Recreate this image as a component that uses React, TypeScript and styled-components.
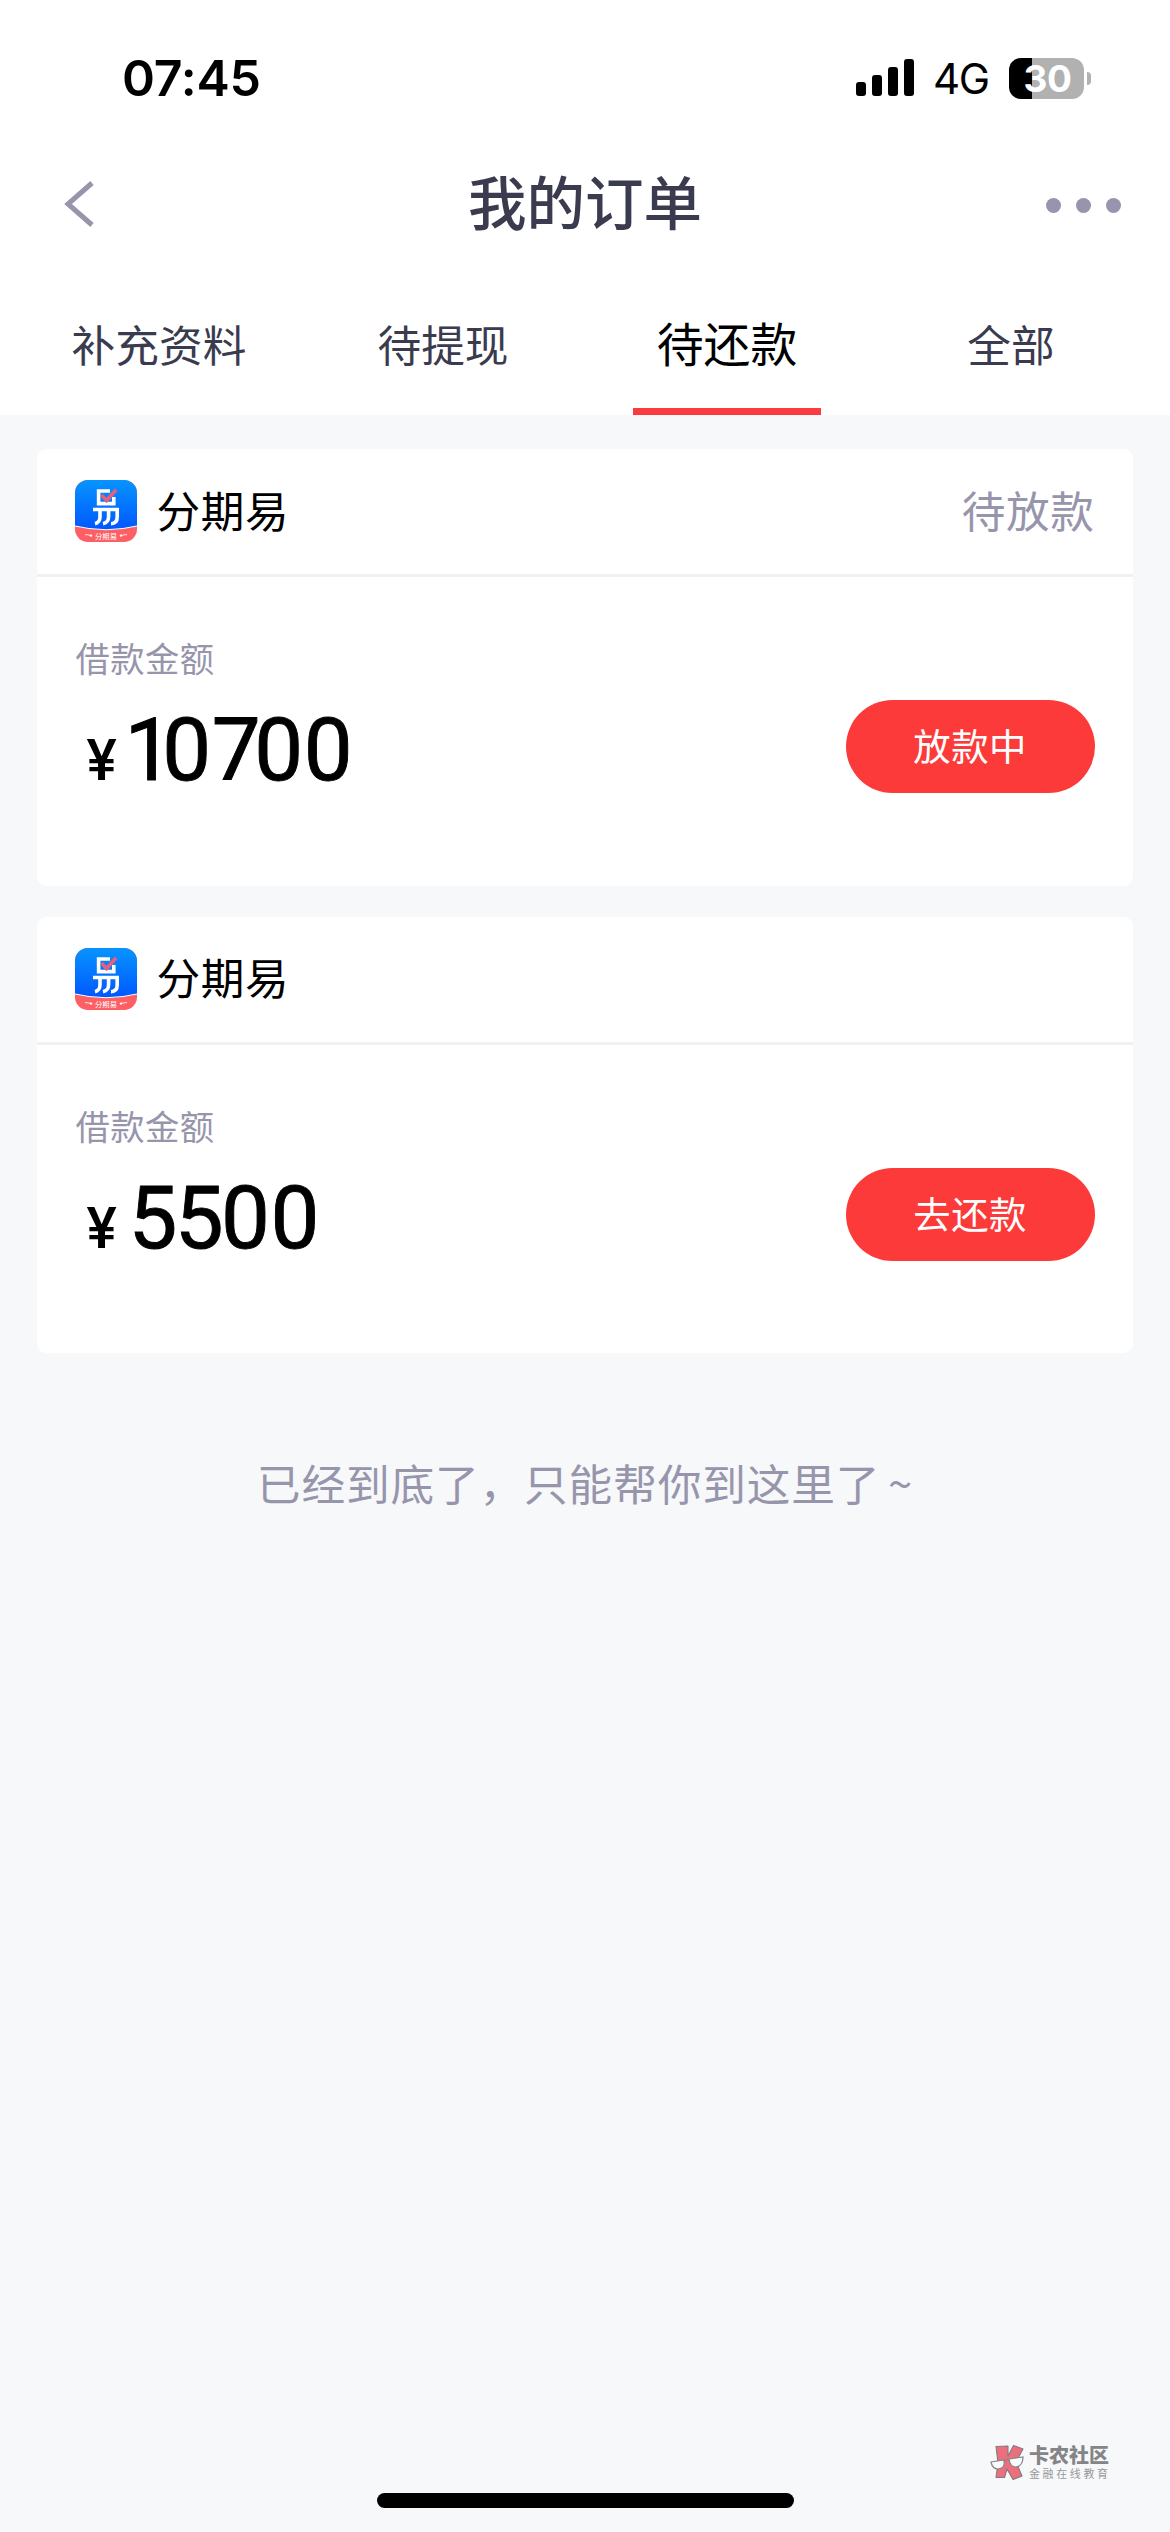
import React from "react";
import styled, { createGlobalStyle } from "styled-components";

const GlobalStyle = createGlobalStyle`
  * { box-sizing: border-box; }
  body { margin: 0; background: #f7f8fa; }
`;

const cjk = `"Noto Sans CJK SC", sans-serif`;

const Screen = styled.div`
  position: relative;
  display: flex;
  flex-direction: column;
  width: 1170px;
  height: 2532px;
  overflow: hidden;
  background: #f7f8fa;
  font-family: ${cjk};
  color: #000;
`;

const Header = styled.header`
  display: flex;
  flex-direction: column;
  height: 415px;
  background: #fff;
`;

const StatusBar = styled.div`
  display: flex;
  justify-content: space-between;
  align-items: center;
  height: 156px;
  padding: 0 79px 0 122px;
  font-family: Inter, "Liberation Sans", sans-serif;
`;

const Clock = styled.span`
  font-size: 50px;
  font-weight: 600;
  line-height: 60px;
  letter-spacing: -0.2px;
`;

const StatusIcons = styled.div`
  display: flex;
  align-items: center;
`;

const Network = styled.span`
  margin: 2px 20px 0 19px;
  width: 56px;
  font-size: 42px;
  line-height: 50px;
  letter-spacing: -1.5px;
  white-space: nowrap;
`;

const Battery = styled.div`
  display: flex;
  align-items: center;
  gap: 3px;
`;

const BatteryBody = styled.div`
  display: flex;
  align-items: center;
  justify-content: center;
  width: 75px;
  height: 41px;
  padding-left: 2px;
  border-radius: 12px;
  background: linear-gradient(to right, #000 23px, #b1b1b1 23px);
  color: #fff;
  font-size: 37px;
  font-weight: 700;
  line-height: 41px;
  letter-spacing: -0.5px;
`;

const BatteryTip = styled.div`
  width: 4px;
  height: 13px;
  border-radius: 0 6px 6px 0;
  background: #b1b1b1;
`;

const NavBar = styled.div`
  display: grid;
  grid-template-columns: 100px 1fr 100px;
  align-items: center;
  height: 96px;
  padding: 0 49px 0 64px;
`;

const Title = styled.h1`
  margin: -8px 0 0 -15px;
  text-align: center;
  font-size: 58.5px;
  font-weight: 500;
  line-height: 86px;
  color: #3a3b4f;
`;

const MoreButton = styled.div`
  display: flex;
  justify-content: flex-end;
  gap: 15px;
  padding-top: 3px;
`;

const Dot = styled.span`
  width: 15px;
  height: 15px;
  border-radius: 50%;
  background: #9795ae;
`;

const Tabs = styled.nav`
  display: grid;
  grid-template-columns: repeat(4, 1fr);
  flex: 1;
  padding: 0 17px;
`;

const Tab = styled.div<{ $active?: boolean }>`
  display: flex;
  justify-content: center;
  align-items: center;
  width: 188px;
  height: 163px;
  justify-self: center;
  padding-top: ${(p) => (p.$active ? 24 : 26)}px;
  border-bottom: ${(p) => (p.$active ? "7px solid #fb3b3f" : "7px solid transparent")};
  font-size: ${(p) => (p.$active ? 46.8 : 43.7)}px;
  line-height: 64px;
  white-space: nowrap;
  color: ${(p) => (p.$active ? "#000" : "#3a3b4f")};
`;

const OrderList = styled.main`
  display: flex;
  flex-direction: column;
  gap: 31.2px;
  padding: 34px 37.4px 0;
`;

const Card = styled.section`
  height: 436.6px;
  border-radius: 9.4px;
  background: #fff;
`;

const CardHeader = styled.div`
  display: flex;
  align-items: center;
  height: 128px;
  padding: 0 38px 1px;
  border-bottom: 3px solid #f0f1f3;
`;

const Merchant = styled.span`
  margin: -5px 0 0 19px;
  flex: 1;
  font-size: 43.7px;
  line-height: 64px;
  letter-spacing: 0.6px;
`;

const Status = styled.span`
  margin-top: -5px;
  font-size: 43.7px;
  line-height: 64px;
  letter-spacing: 0.6px;
  color: #9795ac;
`;

const CardBody = styled.div`
  display: flex;
  justify-content: space-between;
  padding: 55px 38px 0;
`;

const Label = styled.div`
  font-size: 34.3px;
  line-height: 50px;
  letter-spacing: 0.5px;
  color: #9795ac;
`;

const Amount = styled.div`
  display: flex;
  align-items: baseline;
  padding-left: 11px;
  margin-top: 18px;
  font-family: Roboto, "Liberation Sans", sans-serif;
  line-height: 100px;
`;

const Currency = styled.span`
  width: 42px;
  font-size: 57px;
  font-weight: 500;
`;

const Figure = styled.span`
  font-size: 87px;
  font-weight: 400;
  -webkit-text-stroke: 0.9px #000;
`;

const Digit = styled.span<{ $lead: number; $kern: number }>`
  margin-left: ${(p) => p.$lead}px;
  letter-spacing: ${(p) => p.$kern}px;
`;

const Action = styled.button`
  width: 249px;
  height: 93px;
  margin-top: 68px;
  padding: 0 0 3px;
  border: 0;
  border-radius: 46.5px;
  background: #fc3a3a;
  color: #fff;
  font-family: ${cjk};
  font-size: 37.4px;
  line-height: 56px;
  letter-spacing: 0.5px;
`;

const EndNote = styled.p`
  margin: 97px 0 0;
  text-align: center;
  font-size: 43.7px;
  line-height: 64px;
  letter-spacing: 0.85px;
  word-spacing: -3px;
  color: #9795ac;
`;

const Watermark = styled.div`
  position: absolute;
  left: 990px;
  top: 2444px;
  display: flex;
  gap: 4px;
`;

const WatermarkText = styled.div`
  display: flex;
  flex-direction: column;
`;

const WatermarkName = styled.span`
  font-size: 20px;
  font-weight: 900;
  line-height: 22px;
  color: #858587;
`;

const WatermarkTag = styled.span`
  font-size: 11px;
  line-height: 14px;
  letter-spacing: 2.6px;
  color: #98989b;
`;

const HomeIndicator = styled.div`
  position: absolute;
  left: 377px;
  bottom: 24px;
  width: 417px;
  height: 15px;
  border-radius: 8px;
  background: #000;
`;

const SignalIcon = () => (
  <svg width="58" height="38" viewBox="0 0 58 38">
    <rect x="0" y="23" width="10" height="14" rx="3" />
    <rect x="16" y="16" width="10" height="21" rx="3" />
    <rect x="32" y="8" width="10" height="29" rx="3" />
    <rect x="48" y="0" width="10" height="37" rx="3" />
  </svg>
);

const BackIcon = () => (
  <svg width="30" height="46" viewBox="0 0 30 46" fill="none" stroke="#9795ac" strokeWidth="5">
    <path d="M28 2 L4 23 L28 44" />
  </svg>
);

const MerchantLogo = () => (
  <svg width="62" height="62" viewBox="0 0 62 62">
    <defs>
      <linearGradient id="logoBlue" x1="0" y1="0" x2="0" y2="1">
        <stop offset="0" stopColor="#0794ff" />
        <stop offset="1" stopColor="#0057ff" />
      </linearGradient>
      <clipPath id="logoClip">
        <rect width="62" height="62" rx="13" />
      </clipPath>
    </defs>
    <g clipPath="url(#logoClip)">
      <rect width="62" height="62" fill="#fd5f65" />
      <path d="M0 0H62V46Q31 53.500 0 46Z" fill="url(#logoBlue)" />
      <path d="M0 46Q31 53.500 62 46" fill="none" stroke="#fff" strokeWidth="1.1" />
      <g fill="none" stroke="#fff" strokeWidth="3.6">
        <path d="M35 11H23.600V23.600H38.800V17" />
        <path d="M18 29.500H42.200V37Q42.200 43.500 36 43.700" />
        <path d="M25 30V36.500Q25 42.500 20 43.700" />
        <path d="M33.600 30V36.500Q33.600 42.500 28 43.700" />
      </g>
      <path d="M26.500 15L31.500 20.500L41.200 9.800" fill="none" stroke="#e5607c" strokeWidth="3.6" />
      <path d="M10 54.500L17 55.500M45 55.500L52 54.500" stroke="#fff" strokeWidth="0.8" />
      <circle cx="16" cy="55.600" r="1.200" fill="#fff" />
      <circle cx="46" cy="55.600" r="1.200" fill="#fff" />
      <text x="31" y="58.500" textAnchor="middle" fontSize="7.300" fill="#fff" fontFamily="Noto Sans CJK SC">
        分期易
      </text>
    </g>
  </svg>
);

const WatermarkLogo = () => (
  <svg width="35" height="37" viewBox="0 0 35 37">
    <path
      d="M6 2.500L18 2L18 12L23.500 1.500L33 5L26 18L32 32L23 35.500L17 25L14.500 33.500H6L8 19Z"
      fill="#ec6f7d"
      stroke="#85797d"
      strokeWidth="1.100"
      strokeLinejoin="round"
    />
    <g fill="#fafafa" stroke="#85858a" strokeWidth="1.200">
      <path d="M1 18L14 16Q15.500 24.500 8 25Q2.500 25 1 18Z" />
      <path d="M19 15L33 13Q33 22 26 23Q20 23 19 15Z" />
      <path d="M14 17.500Q16.500 14.500 19 16" fill="none" />
    </g>
  </svg>
);

/* Space before and after each numeral: the amount uses proportional figures. */
const spacing: Record<string, [number, number]> = {
  "1": [-4, -11],
  "7": [0, -6.5],
  "5": [0, -2.6],
  "0": [0, 0.6],
};

interface Order {
  amount: string;
  status?: string;
  action: string;
}

const orders: Order[] = [
  { amount: "10700", status: "待放款", action: "放款中" },
  { amount: "5500", action: "去还款" },
];

const tabs = ["补充资料", "待提现", "待还款", "全部"];

const OrderCard = ({ amount, status, action }: Order) => (
  <Card>
    <CardHeader>
      <MerchantLogo />
      <Merchant>分期易</Merchant>
      {status && <Status>{status}</Status>}
    </CardHeader>
    <CardBody>
      <div>
        <Label>借款金额</Label>
        <Amount>
          <Currency>¥</Currency>
          <Figure>
            {amount.split("").map((d, i) => (
              <Digit key={i} $lead={spacing[d]?.[0] ?? 0} $kern={spacing[d]?.[1] ?? 0}>
                {d}
              </Digit>
            ))}
          </Figure>
        </Amount>
      </div>
      <Action>{action}</Action>
    </CardBody>
  </Card>
);

export default function App() {
  return (
    <Screen>
      <GlobalStyle />
      <Header>
        <StatusBar>
          <Clock>07:45</Clock>
          <StatusIcons>
            <SignalIcon />
            <Network>4G</Network>
            <Battery>
              <BatteryBody>30</BatteryBody>
              <BatteryTip />
            </Battery>
          </StatusIcons>
        </StatusBar>
        <NavBar>
          <BackIcon />
          <Title>我的订单</Title>
          <MoreButton>
            <Dot />
            <Dot />
            <Dot />
          </MoreButton>
        </NavBar>
        <Tabs>
          {tabs.map((t) => (
            <Tab key={t} $active={t === "待还款"}>{t}</Tab>
          ))}
        </Tabs>
      </Header>
      <OrderList>
        {orders.map((o) => (
          <OrderCard key={o.amount} {...o} />
        ))}
      </OrderList>
      <EndNote>已经到底了，只能帮你到这里了 ~</EndNote>
      <Watermark>
        <WatermarkLogo />
        <WatermarkText>
          <WatermarkName>卡农社区</WatermarkName>
          <WatermarkTag>金融在线教育</WatermarkTag>
        </WatermarkText>
      </Watermark>
      <HomeIndicator />
    </Screen>
  );
}
